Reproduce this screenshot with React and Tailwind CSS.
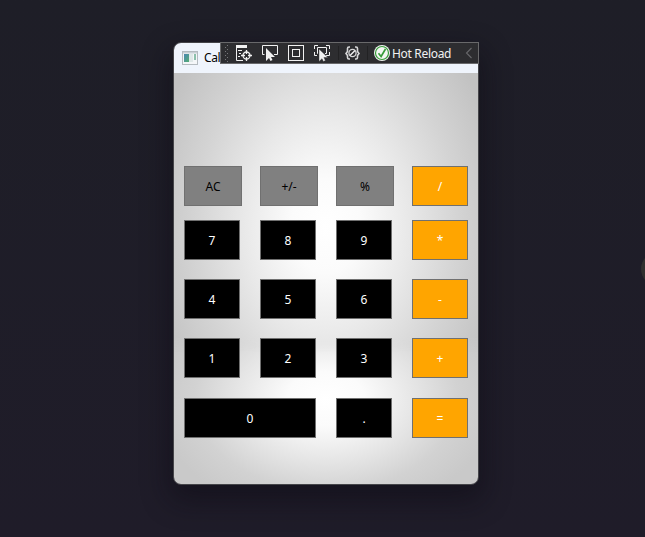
import React from "react";

const ROWS = [
  {
    gap: "mb-[14px]",
    keys: [
      ["AC", "gray"],
      ["+/-", "gray"],
      ["%", "gray"],
      ["/", "orange"],
    ],
  },
  { gap: "mb-[19px]", keys: [["7", "black"], ["8", "black"], ["9", "black"], ["*", "orange"]] },
  { gap: "mb-[19px]", keys: [["4", "black"], ["5", "black"], ["6", "black"], ["-", "orange"]] },
  { gap: "mb-[20px]", keys: [["1", "black"], ["2", "black"], ["3", "black"], ["+", "orange"]] },
  { gap: "mb-0", keys: [["0", "wide"], [".", "black"], ["=", "orange"]] },
];

const STYLES = {
  gray: "w-[58px] bg-[#808080] text-black",
  orange: "w-14 bg-[#ffa500] text-white",
  black: "w-14 bg-black text-white",
  wide: "col-span-2 w-[132px] bg-black text-white",
};

function Key({ label, kind }) {
  return (
    <button
      className={`flex h-10 items-center justify-center border border-[#707070] pt-px text-[12px] leading-4 ${STYLES[kind]}`}
    >
      {label}
    </button>
  );
}

function AppIcon() {
  return (
    <svg width="16" height="14" viewBox="0 0 16 14" className="-mt-px mr-[6px] shrink-0">
      <defs>
        <linearGradient id="app" x1="0" y1="0" x2="1" y2="1">
          <stop offset="0" stopColor="#4a86b4" />
          <stop offset="1" stopColor="#55b06c" />
        </linearGradient>
      </defs>
      <rect x="0.5" y="0.5" width="15" height="13" fill="#f4f6f8" stroke="#b4babf" />
      <rect x="1" y="1" width="14" height="1.500" fill="#c9d0d6" />
      <rect x="2" y="3" width="6" height="8" fill="url(#app)" />
      <rect x="7" y="3" width="4" height="8" fill="#dfe8e8" />
      <rect x="12" y="3" width="2" height="6" fill="#8cc0ac" />
    </svg>
  );
}

function Toolbar() {
  return (
    <div className="absolute left-[46px] top-[-1px] flex h-[22px] w-[259px] items-center border border-[#69696b] bg-[#2d2d30]">
      <svg width="257" height="20" viewBox="0 0 257 20" className="absolute left-0 top-0" fill="none">
        <defs>
          <pattern id="grip" width="4" height="4" patternUnits="userSpaceOnUse">
            <rect x="0" y="0" width="1" height="1" fill="#77777a" />
            <rect x="2" y="2" width="1" height="1" fill="#77777a" />
          </pattern>
        </defs>
        <rect x="3" y="1" width="5" height="18" fill="url(#grip)" />

        {/* Live visual tree */}
        <path d="M15 2h11v3H15z" fill="#f1f1f1" />
        <path d="M15.500 4v13.500H22M17 7.500h4M18 10.500h2M17 13.500h2" stroke="#f1f1f1" />
        <circle cx="25.500" cy="12.500" r="3.500" stroke="#f1f1f1" strokeWidth="1.300" />
        <path d="M25.500 7v4M25.500 14v4M20 12.500h4M27 12.500h4" stroke="#f1f1f1" strokeWidth="1.300" />

        {/* Select element */}
        <path d="M43.500 11.500h-2v-9h15v9H53" stroke="#f1f1f1" />
        <path d="M45 5v13l3-3 1.500 3 2-1-1.500-3h4z" fill="#f1f1f1" />

        {/* Display layout adorners */}
        <rect x="67.500" y="2.500" width="15" height="15" stroke="#f1f1f1" />
        <rect x="71.500" y="6.500" width="7" height="7" stroke="#f1f1f1" />

        {/* Track focused element */}
        <path d="M93.500 6V2.500H97M105 2.500h3.500V6M93.500 9v3.500H96M108.500 9v3.500H105" stroke="#f1f1f1" />
        <path d="M97 10.500h-.5v-6h9v6H104" stroke="#f1f1f1" />
        <path d="M98 6v12.500l3-2.800 1.400 2.800 2-1-1.500-3h4z" fill="#f1f1f1" stroke="#2d2d30" strokeWidth="0.400" />

        <path d="M117.500 3v14M146.500 3v14" stroke="#222224" />

        {/* Binding failures */}
        <path
          d="M129 4h-1q-1.500 0-1.500 1.500v3l-1.500 2 1.500 2v2q0 1.500 1.500 1.500h1M134 4h1q1.500 0 1.500 1.500v3l1.500 2-1.500 2v2q0 1.500-1.500 1.500h-1"
          stroke="#d8d8d9"
          strokeWidth="1.600"
        />
        <circle cx="131.500" cy="10" r="3.600" stroke="#d8d8d9" strokeWidth="1.300" />
        <path d="M129 12.500l5-5" stroke="#f1f1f1" strokeWidth="1.500" />

        {/* Hot reload status */}
        <circle cx="161" cy="10" r="8" fill="#f3f7f3" />
        <circle cx="161" cy="10" r="6.500" stroke="#389b3b" strokeWidth="1.200" />
        <path d="M157.500 10.200l2.600 3.300 4.400-7.500" stroke="#389b3b" strokeWidth="1.700" />

        <path d="M250.500 5l-5 5 5 5" stroke="#68686b" strokeWidth="1.100" />
      </svg>
      <span className="ml-[171px] mt-[2px] whitespace-nowrap font-['Noto_Sans',sans-serif] text-[12px] leading-5 tracking-[-0.32px] text-[#f1f1f1]">
        Hot Reload
      </span>
    </div>
  );
}

export default function App() {
  return (
    <div className="relative h-[537px] w-[645px] overflow-hidden bg-gradient-to-b from-[#1e1e27] to-[#1f1c29] pl-[173px] pt-[42px] font-['Noto_Sans','Open_Sans',sans-serif]">
      <div className="relative h-[443px] w-[306px] rounded-lg border border-[#454549] shadow-[0_12px_28px_4px_rgba(10,8,18,0.45)]">
        <div className="flex h-full w-full flex-col overflow-hidden rounded-[7px]">
          <div className="flex h-[30px] shrink-0 items-center bg-[#eff4fc] pl-2 text-[12px] leading-4 tracking-[-0.4px] text-black">
            <AppIcon />
            <span>Calculator</span>
          </div>
          <div className="relative flex-1 bg-[radial-gradient(ellipse_155px_108px_at_152px_326px,#ffffff_0%,#fbfbfb_25%,#e5e5e5_58%,#d2d2d2_85%,#c9c9c9_110%)] pl-[10px] pt-[93px]">
            <div className="absolute inset-x-0 top-0 h-[279px] bg-[radial-gradient(ellipse_158px_215px_at_152px_153px,#ffffff_0%,#fbfbfb_22%,#e8e8e8_53%,#d4d4d4_83%,#c2c2c2_114%)] [mask-image:linear-gradient(to_bottom,black_264px,transparent_279px)]" />
            <div className="relative">
              {ROWS.map((row) => (
                <div key={row.keys[0][0]} className={`grid grid-cols-[repeat(4,76px)] ${row.gap}`}>
                  {row.keys.map(([label, kind]) => (
                    <Key key={label} label={label} kind={kind} />
                  ))}
                </div>
              ))}
            </div>
          </div>
        </div>
        <Toolbar />
      </div>
      <div className="absolute left-[641px] top-[252px] h-[34px] w-[34px] rounded-full bg-[#30302f]" />
    </div>
  );
}
